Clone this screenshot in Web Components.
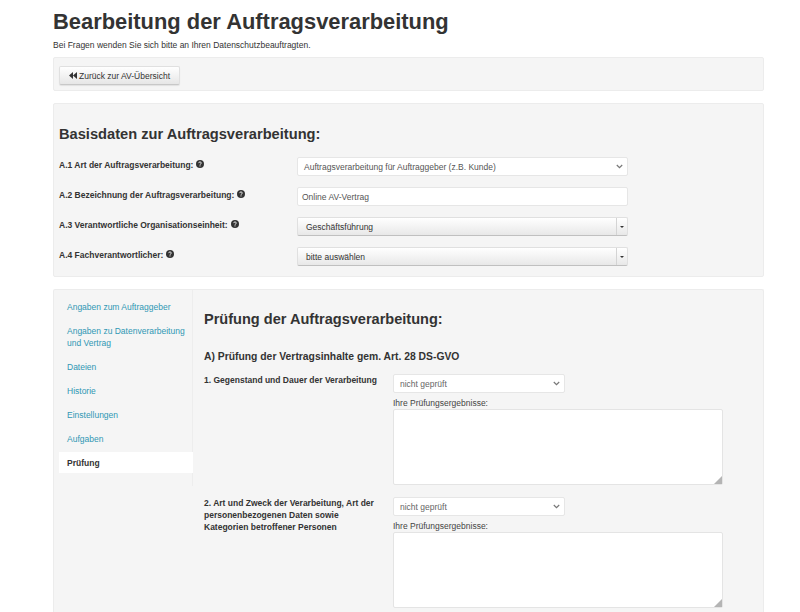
<!DOCTYPE html>
<html lang="de">
<head>
<meta charset="utf-8">
<title>Bearbeitung der Auftragsverarbeitung</title>
<style>
  html, body { margin: 0; padding: 0; background: #fff; height: 612px; overflow: hidden; }
  body { font-family: "Liberation Sans", Arial, sans-serif; color: #333; }
</style>
</head>
<body>
<av-page>
  <av-well slot="top" compact><av-button>Zurück zur AV-Übersicht</av-button></av-well>
  <av-well slot="base">
    <av-base-form></av-base-form>
  </av-well>
  <av-well slot="detail" flush>
    <av-detail>
      <av-review-item label="1. Gegenstand und Dauer der Verarbeitung"></av-review-item>
      <av-review-item label="2. Art und Zweck der Verarbeitung, Art der personenbezogenen Daten sowie Kategorien betroffener Personen"></av-review-item>
    </av-detail>
  </av-well>
</av-page>

<script>
// Shared chevron of the native looking selects
const CHEVRON = `<svg width="7" height="5" viewBox="0 0 7 5" aria-hidden="true"><path d="M.8 1l2.7 2.7L6.2 1" fill="none" stroke="#777" stroke-width="1.2"/></svg>`;

class AvPage extends HTMLElement {
  constructor() {
    super();
    this.attachShadow({ mode: 'open' });
    this.shadowRoot.innerHTML = `
      <style>
        :host { display: block; width: 711px; margin-left: 53px; }
        h1 { margin: 0; padding-top: 8px; font-size: 21.9px; line-height: 27px; font-weight: 700; color: #333; }
        p { margin: 4px 0 0; font-size: 8.5px; line-height: 12px; color: #333; }
        .stack { display: flex; flex-direction: column; margin-top: 6px; }
        ::slotted([slot="base"]) { margin-top: 12px; }
        ::slotted([slot="detail"]) { margin-top: 12px; }
      </style>
      <h1>Bearbeitung der Auftragsverarbeitung</h1>
      <p>Bei Fragen wenden Sie sich bitte an Ihren Datenschutzbeauftragten.</p>
      <div class="stack">
        <slot name="top"></slot>
        <slot name="base"></slot>
        <slot name="detail"></slot>
      </div>`;
  }
}

class AvWell extends HTMLElement {
  constructor() {
    super();
    this.attachShadow({ mode: 'open' });
    this.shadowRoot.innerHTML = `
      <style>
        :host { display: block; box-sizing: border-box; background: #f5f5f5; border: 1px solid #ececec; border-radius: 2px; padding: 0 5px; }
        :host([compact]) { height: 34px; padding-top: 7px; }
        :host([flush]) { padding: 0; height: 340px; border-bottom: 0; }
      </style>
      <slot></slot>`;
  }
}

class AvButton extends HTMLElement {
  constructor() {
    super();
    this.attachShadow({ mode: 'open' });
    this.shadowRoot.innerHTML = `
      <style>
        :host { display: inline-flex; align-items: center; gap: 2px; box-sizing: border-box; height: 19px; width: 121px; padding-left: 9px;
          font-size: 8.5px; color: #333; border: 1px solid #e0e0e0; border-bottom-color: #c8c8c8; border-radius: 2px;
          background: linear-gradient(#fff, #e6e6e6); box-shadow: 0 1px 1px rgba(0,0,0,.08); }
        svg { display: block; }
      </style>
      <svg width="8" height="7" viewBox="0 0 8 7" aria-hidden="true"><path d="M4 0v7L0 3.5zM8 0v7L4 3.5z" fill="#333"/></svg>
      <span><slot></slot></span>`;
  }
}

class AvHelp extends HTMLElement {
  constructor() {
    super();
    this.attachShadow({ mode: 'open' });
    this.shadowRoot.innerHTML = `
      <style>
        :host { display: inline-block; width: 8px; height: 8px; vertical-align: -0.5px; margin-left: 3px; }
        svg { display: block; }
      </style>
      <svg width="8" height="8" viewBox="0 0 8 8" aria-hidden="true">
        <circle cx="4" cy="4" r="4" fill="#333"/>
        <path d="M2.7 3.1c0-.8.6-1.2 1.3-1.2s1.3.4 1.3 1.1c0 .9-1.2 1-1.3 1.8" fill="none" stroke="#f5f5f5" stroke-width=".9"/>
        <rect x="3.5" y="5.4" width="1" height="1" fill="#f5f5f5"/>
      </svg>`;
  }
}

// Plain native style select, also used for the text input when "text" is set
class AvSelect extends HTMLElement {
  static get observedAttributes() { return ['value']; }
  constructor() {
    super();
    this.attachShadow({ mode: 'open' });
    this.render();
  }
  attributeChangedCallback() { this.render(); }
  render() {
    const isText = this.hasAttribute('text');
    this.shadowRoot.innerHTML = `
      <style>
        :host { display: flex; align-items: center; justify-content: space-between; box-sizing: border-box; height: 19px;
          background: #fff; border: 1px solid #e6e6e6; border-radius: 2px; font-size: 8.5px; color: #555;
          padding: 0 4px 0 ${isText ? 4 : 6}px; }
      </style>
      <span>${this.getAttribute('value') || ''}</span>${isText ? '' : CHEVRON}`;
  }
}

// Bootstrap-select style picker with the split caret part
class AvPicker extends HTMLElement {
  constructor() {
    super();
    this.attachShadow({ mode: 'open' });
    this.shadowRoot.innerHTML = `
      <style>
        :host { display: flex; box-sizing: border-box; height: 19px; font-size: 8.5px; color: #333;
          border: 1px solid #e0e0e0; border-bottom-color: #c0c0c0; border-radius: 2px;
          background: linear-gradient(#fff, #e8e8e8); }
        .value { flex: 1; display: flex; align-items: center; padding-left: 8px; }
        .caret { width: 10px; display: flex; align-items: center; justify-content: center; border-left: 1px solid #d4d4d4; }
        .caret i { width: 0; height: 0; border: 2px solid transparent; border-top: 2px solid #333; border-bottom: 0; }
      </style>
      <div class="value"><slot></slot></div>
      <div class="caret"><i></i></div>`;
  }
}

class AvFormRow extends HTMLElement {
  constructor() {
    super();
    this.attachShadow({ mode: 'open' });
    this.shadowRoot.innerHTML = `
      <style>
        :host { display: grid; grid-template-columns: 238px 331px; align-items: center; height: 19px; font-size: 8.5px; font-weight: 700; color: #333; }
        .label { position: relative; top: -2px; white-space: nowrap; }
      </style>
      <div class="label">${this.getAttribute('label')}<av-help></av-help></div>
      <div style="font-weight:400"><slot></slot></div>`;
  }
}

class AvBaseForm extends HTMLElement {
  constructor() {
    super();
    this.attachShadow({ mode: 'open' });
    this.shadowRoot.innerHTML = `
      <style>
        :host { display: block; padding-top: 21px; height: 172px; box-sizing: border-box; }
        h2 { margin: 0 0 14px; font-size: 14.65px; line-height: 18px; font-weight: 700; color: #333; }
        .rows { display: flex; flex-direction: column; gap: 11px; }
      </style>
      <h2>Basisdaten zur Auftragsverarbeitung:</h2>
      <div class="rows">
        <av-form-row label="A.1 Art der Auftragsverarbeitung:"><av-select value="Auftragsverarbeitung für Auftraggeber (z.B. Kunde)"></av-select></av-form-row>
        <av-form-row label="A.2 Bezeichnung der Auftragsverarbeitung:"><av-select text value="Online AV-Vertrag"></av-select></av-form-row>
        <av-form-row label="A.3 Verantwortliche Organisationseinheit:"><av-picker>Geschäftsführung</av-picker></av-form-row>
        <av-form-row label="A.4 Fachverantwortlicher:"><av-picker>bitte auswählen</av-picker></av-form-row>
      </div>`;
  }
}

class AvSideNav extends HTMLElement {
  constructor() {
    super();
    this.attachShadow({ mode: 'open' });
    const items = ['Angaben zum Auftraggeber', 'Angaben zu Datenverarbeitung und Vertrag', 'Dateien', 'Historie', 'Einstellungen', 'Aufgaben', 'Prüfung'];
    const links = items.map((text, i) =>
      `<a class="${i === items.length - 1 ? 'active' : ''}">${text}</a>`).join('');
    this.shadowRoot.innerHTML = `
      <style>
        :host { display: block; box-sizing: border-box; width: 139px; height: 196px; padding: 6px 0 0 5px; border-right: 1px solid #ededed; font-size: 8.5px; }
        nav { display: flex; flex-direction: column; gap: 3px; }
        a { display: block; padding: 4.5px 4px 4.5px 8px; line-height: 12px; color: #2f97b4; }
        a.active { background: #fff; color: #333; font-weight: 700; margin-right: -1px; }
      </style>
      <nav>${links}</nav>`;
  }
}

class AvDetail extends HTMLElement {
  constructor() {
    super();
    this.attachShadow({ mode: 'open' });
    this.shadowRoot.innerHTML = `
      <style>
        :host { display: flex; }
        main { flex: 1; padding: 19px 0 0 11px; }
        h2 { margin: 0; font-size: 14.55px; line-height: 20px; font-weight: 700; color: #333; }
        h3 { margin: 21px 0 0; font-size: 10.35px; line-height: 14px; font-weight: 700; color: #333; }
        .items { display: flex; flex-direction: column; gap: 12px; margin-top: 10px; }
      </style>
      <av-side-nav></av-side-nav>
      <main>
        <h2>Prüfung der Auftragsverarbeitung:</h2>
        <h3>A) Prüfung der Vertragsinhalte gem. Art. 28 DS-GVO</h3>
        <div class="items"><slot></slot></div>
      </main>`;
  }
}

class AvReviewItem extends HTMLElement {
  constructor() {
    super();
    this.attachShadow({ mode: 'open' });
    this.shadowRoot.innerHTML = `
      <style>
        :host { display: grid; grid-template-columns: 189px 330px; }
        .label { font-size: 8.5px; line-height: 12px; font-weight: 700; color: #333; width: 176px; }
        av-select { width: 172px; color: #666; }
        .hint { font-size: 8.5px; line-height: 11px; color: #444; margin-top: 5px; }
        .area { position: relative; box-sizing: border-box; height: 76px; background: #fff; border: 1px solid #e4e4e4; border-radius: 2px; }
        .area svg { position: absolute; right: 0; bottom: 0; }
      </style>
      <div class="label">${this.getAttribute('label')}</div>
      <div>
        <av-select value="nicht geprüft"></av-select>
        <div class="hint">Ihre Prüfungsergebnisse:</div>
        <div class="area"><svg width="8" height="8" viewBox="0 0 8 8" aria-hidden="true"><path d="M8 0v8H0z" fill="#b4b4b4"/></svg></div>
      </div>`;
  }
}

customElements.define('av-page', AvPage);
customElements.define('av-well', AvWell);
customElements.define('av-button', AvButton);
customElements.define('av-help', AvHelp);
customElements.define('av-select', AvSelect);
customElements.define('av-picker', AvPicker);
customElements.define('av-form-row', AvFormRow);
customElements.define('av-base-form', AvBaseForm);
customElements.define('av-side-nav', AvSideNav);
customElements.define('av-detail', AvDetail);
customElements.define('av-review-item', AvReviewItem);
</script>
</body>
</html>
